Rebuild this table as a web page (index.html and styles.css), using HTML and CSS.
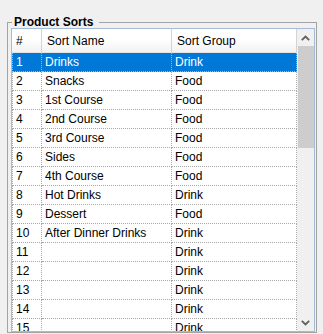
FILE: index.html
```html
<!DOCTYPE html>
<html>
<head>
<meta charset="utf-8">
<link rel="stylesheet" href="styles.css">
</head>
<body>
<fieldset class="group">
  <legend class="group-title">Product Sorts</legend>
  <div class="grid">
    <div class="grid-main">
      <div class="row head">
        <div class="cell c1">#</div>
        <div class="cell c2">Sort Name</div>
        <div class="cell c3">Sort Group</div>
      </div>
      <div class="row sel"><div class="cell c1">1</div><div class="cell c2">Drinks</div><div class="cell c3">Drink</div></div>
      <div class="row"><div class="cell c1">2</div><div class="cell c2">Snacks</div><div class="cell c3">Food</div></div>
      <div class="row"><div class="cell c1">3</div><div class="cell c2">1st Course</div><div class="cell c3">Food</div></div>
      <div class="row"><div class="cell c1">4</div><div class="cell c2">2nd Course</div><div class="cell c3">Food</div></div>
      <div class="row"><div class="cell c1">5</div><div class="cell c2">3rd Course</div><div class="cell c3">Food</div></div>
      <div class="row"><div class="cell c1">6</div><div class="cell c2">Sides</div><div class="cell c3">Food</div></div>
      <div class="row"><div class="cell c1">7</div><div class="cell c2">4th Course</div><div class="cell c3">Food</div></div>
      <div class="row"><div class="cell c1">8</div><div class="cell c2">Hot Drinks</div><div class="cell c3">Drink</div></div>
      <div class="row"><div class="cell c1">9</div><div class="cell c2">Dessert</div><div class="cell c3">Food</div></div>
      <div class="row"><div class="cell c1">10</div><div class="cell c2">After Dinner Drinks</div><div class="cell c3">Drink</div></div>
      <div class="row"><div class="cell c1">11</div><div class="cell c2"></div><div class="cell c3">Drink</div></div>
      <div class="row"><div class="cell c1">12</div><div class="cell c2"></div><div class="cell c3">Drink</div></div>
      <div class="row"><div class="cell c1">13</div><div class="cell c2"></div><div class="cell c3">Drink</div></div>
      <div class="row"><div class="cell c1">14</div><div class="cell c2"></div><div class="cell c3">Drink</div></div>
      <div class="row"><div class="cell c1">15</div><div class="cell c2"></div><div class="cell c3">Drink</div></div>
      <div class="row"><div class="cell c1">16</div><div class="cell c2"></div><div class="cell c3">Drink</div></div>
    </div>
    <div class="vscroll">
      <div class="sbtn"><svg width="9" height="6" viewBox="0 0 9 6"><polyline points="0.8,5.2 4.5,1.5 8.2,5.2" fill="none" stroke="#606060" stroke-width="1.8"/></svg></div>
      <div class="thumb"></div>
      <div class="track"></div>
      <div class="sbtn"><svg width="9" height="6" viewBox="0 0 9 6"><polyline points="0.8,0.8 4.5,4.5 8.2,0.8" fill="none" stroke="#606060" stroke-width="1.8"/></svg></div>
    </div>
  </div>
</fieldset>
</body>
</html>
```
FILE: styles.css
```css
html, body {
  margin: 0;
  padding: 0;
  background: #f0f0f0;
  overflow: hidden;
  height: 334px;
}
body {
  font-family: "Liberation Sans", Arial, sans-serif;
  font-size: 12px;
  color: #000;
}
.group {
  margin: 16px 6px 0 7px;
  padding: 0 1px 0 3px;
  border: 1px solid #a3a3a3;
  min-width: 0;
}
.group-title {
  margin-left: 1px;
  padding: 0 6px 0 2px;
  font-weight: bold;
  font-size: 12px;
  line-height: 12px;
}
.grid {
  margin-top: 0;
  height: 302px;
  border: 1px solid #a5bcd9;
  background: #fff;
  display: flex;
  overflow: hidden;
}
.grid-main {
  width: 285px;
  overflow: hidden;
}
.row {
  display: grid;
  grid-template-columns: 30px 130px 125px;
  height: 19px;
}
.cell {
  border-right: 1px dotted #a8a8a8;
  border-bottom: 1px dotted #a8a8a8;
  padding-left: 3px;
  line-height: 18px;
  white-space: nowrap;
  overflow: hidden;
}
.row .c1 {
  border-left: 1px dotted #a8a8a8;
}
.row.head {
  height: 24px;
}
.head .cell {
  border-left: 0;
  border-right: 1px solid #d3d3d3;
  border-bottom: 1px solid #e3e3e3;
  background: linear-gradient(to bottom, #ffffff 0%, #ffffff 45%, #f2f2f2 100%);
  padding-top: 2px;
  line-height: 21px;
  padding-left: 4px;
}
.head .c2, .head .c3 {
  padding-left: 5px;
}
.head .c3 {
  border-right: 1px solid #d3d3d3;
}
.sel .cell {
  background: #0078d7;
  color: #fff;
  border-color: #8cbde8;
}
.vscroll {
  width: 17px;
  display: flex;
  flex-direction: column;
  background: #f0f0f0;
}
.sbtn {
  height: 17px;
  display: flex;
  align-items: center;
  justify-content: center;
}
.thumb {
  height: 102px;
  margin: 0 0 0 1px;
  background: #cdcdcd;
}
.track {
  flex: 1;
}
```
